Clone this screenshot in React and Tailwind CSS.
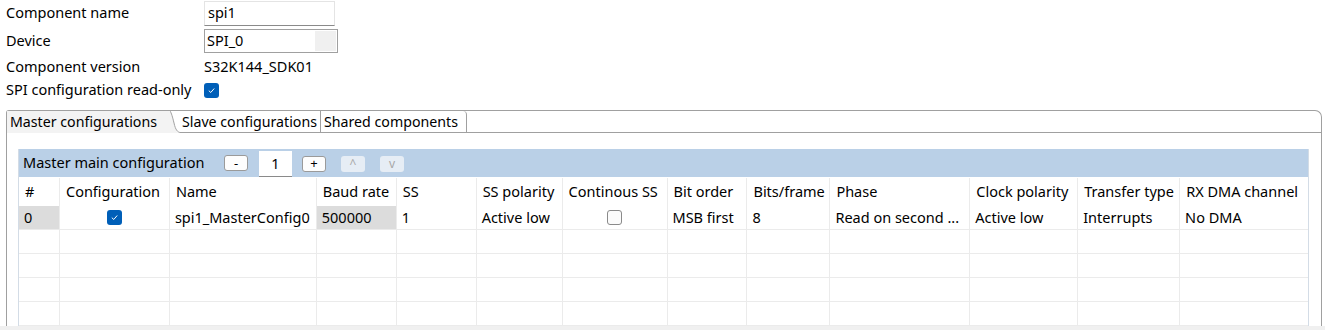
import React from 'react';

const columns = [
  { label: '#', w: 40 },
  { label: 'Configuration', w: 110 },
  { label: 'Name', w: 147 },
  { label: 'Baud rate', w: 80 },
  { label: 'SS', w: 80 },
  { label: 'SS polarity', w: 86 },
  { label: 'Continous SS', w: 105 },
  { label: 'Bit order', w: 80 },
  { label: 'Bits/frame', w: 83 },
  { label: 'Phase', w: 140 },
  { label: 'Clock polarity', w: 108 },
  { label: 'Transfer type', w: 102 },
  { label: 'RX DMA channel', w: 129 },
];

const firstRow = [
  { text: '0', gray: true },
  { check: true },
  { text: 'spi1_MasterConfig0' },
  { text: '500000', gray: true },
  { text: '1' },
  { text: 'Active low' },
  { check: false },
  { text: 'MSB first' },
  { text: '8' },
  { text: 'Read on second ...' },
  { text: 'Active low' },
  { text: 'Interrupts' },
  { text: 'No DMA' },
];

function Checkbox({ checked }) {
  if (checked) {
    return (
      <span className="inline-flex items-center justify-center w-[15px] h-[15px] rounded-[3px] bg-[#005fb8]">
        <svg width="9" height="9" viewBox="0 0 10 10">
          <path d="M2 5.2 L4.2 7.2 L8 2.8" fill="none" stroke="white" strokeWidth="1.1" />
        </svg>
      </span>
    );
  }
  return <span className="inline-block w-[15px] h-[15px] rounded-[3px] border border-[#8a8a8a] bg-[#fbfbfb]" />;
}

function SmallButton({ children, faded }) {
  return (
    <span
      className={
        faded
          ? 'inline-flex items-center justify-center w-[24px] h-[16px] rounded-[3px] bg-[#e6edf5] text-[#a8a8a8] text-[12px] leading-none'
          : 'inline-flex items-center justify-center w-[24px] h-[16px] rounded-[3px] bg-[#fdfdfd] border border-[#9a9a9a] text-black text-[13px] leading-none'
      }
    >
      {children}
    </span>
  );
}

export default function App() {
  return (
    <div className="w-[1325px] h-[330px] overflow-hidden bg-white text-black text-[14.5px] flex flex-col" style={{ fontFamily: '"Noto Sans", "Open Sans", sans-serif' }}>
      {/* top form */}
      <div className="flex flex-col pl-[6px]">
        <div className="flex items-center h-[26px]">
          <span className="w-[198px]">Component name</span>
          <div className="w-[131px] h-[25px] bg-white border border-[#e4e4e4] border-b-[#8a8a8a] flex items-center pl-[3px]">spi1</div>
        </div>
        <div className="flex items-center h-[28px] mt-[1px]">
          <span className="w-[198px]">Device</span>
          <div className="w-[134px] h-[24px] border border-[#a0a0a0] flex items-stretch">
            <span className="flex-1 flex items-center pl-[2px]">SPI_0</span>
            <span className="w-[21px] bg-[#f0f0f0] my-[1px] mr-[1px]" />
          </div>
        </div>
        <div className="flex items-center h-[24px]">
          <span className="w-[198px]">Component version</span>
          <span>S32K144_SDK01</span>
        </div>
        <div className="flex items-center h-[22px]">
          <span className="w-[198px]">SPI configuration read-only</span>
          <Checkbox checked />
        </div>
      </div>

      {/* tab panel */}
      <div className="mt-[9px] ml-[6px] mr-[3px] flex-1 flex flex-col border border-b-0 border-[#a0a0a0] rounded-tr-[7px] rounded-tl-[3px]">
        <div className="flex h-[22px] text-[14.2px]">
          <div className="w-[163px] bg-[#f3f3f3] flex items-center pl-[3px] whitespace-nowrap">Master configurations</div>
          <svg width="10" height="22" viewBox="0 0 10 22" className="bg-white shrink-0">
            <path d="M0 0 L0 22 L10 22 C7 22 5 19 3.5 12 C2 5 1 0 0 0 Z" fill="#f3f3f3" />
            <path d="M0 0 C1.5 2 2.5 6 4 12 C5.5 19 7.5 21 10 21.5" fill="none" stroke="#a0a0a0" strokeWidth="1" />
          </svg>
          <div className="w-[141px] flex items-center pl-[2px] border-b border-[#a0a0a0] border-r whitespace-nowrap overflow-hidden">Slave configurations</div>
          <div className="w-[146px] flex items-center pl-[3px] border-b border-r border-[#a0a0a0] rounded-tr-[4px] whitespace-nowrap">Shared components</div>
          <div className="flex-1 border-b border-[#a0a0a0]" />
        </div>

        <div className="flex-1 pt-[16px] pl-[11px] pr-[12px]">
          <div className="border-l border-r border-[#d3dce6]">
            <div className="h-[28px] bg-[#bad0e7] flex items-center pl-[4px]">
              <span className="w-[201px] whitespace-nowrap">Master main configuration</span>
              <SmallButton>-</SmallButton>
              <span className="ml-[11px] w-[33px] h-[26px] bg-white border-b border-[#8a8a8a] flex items-center justify-center self-end">1</span>
              <span className="ml-[10px]"><SmallButton>+</SmallButton></span>
              <span className="ml-[15px]"><SmallButton faded>^</SmallButton></span>
              <span className="ml-[15px]"><SmallButton faded>v</SmallButton></span>
            </div>

            <div className="flex h-[28px] mt-[1px]">
              {columns.map((c, i) => (
                <div key={c.label} className={`${i > 0 ? 'border-l border-[#ebebeb]' : ''} flex items-center pl-[6px] whitespace-nowrap overflow-hidden`} style={{ width: c.w }}>
                  {c.label}
                </div>
              ))}
            </div>

            <div className="flex h-[24px] border-b border-[#ebebeb]">
              {firstRow.map((cell, i) => (
                <div
                  key={i}
                  className={`${i > 0 ? 'border-l border-[#ebebeb]' : ''} ${cell.gray ? 'bg-[#dcdcdc]' : ''} ${cell.check !== undefined ? 'justify-center' : 'pl-[5px]'} flex items-center whitespace-nowrap overflow-hidden`}
                  style={{ width: columns[i].w }}
                >
                  {cell.check !== undefined ? <Checkbox checked={cell.check} /> : cell.text}
                </div>
              ))}
            </div>

            {[0, 1, 2, 3].map((r) => (
              <div key={r} className="flex h-[24px] border-b border-[#ebebeb]">
                {columns.map((c, i) => (
                  <div key={i} className={i > 0 ? 'border-l border-[#ebebeb]' : ''} style={{ width: c.w }} />
                ))}
              </div>
            ))}
          </div>
        </div>
      </div>
      <div className="h-[4px] bg-[#f0f0f0] shrink-0" />
    </div>
  );
}
